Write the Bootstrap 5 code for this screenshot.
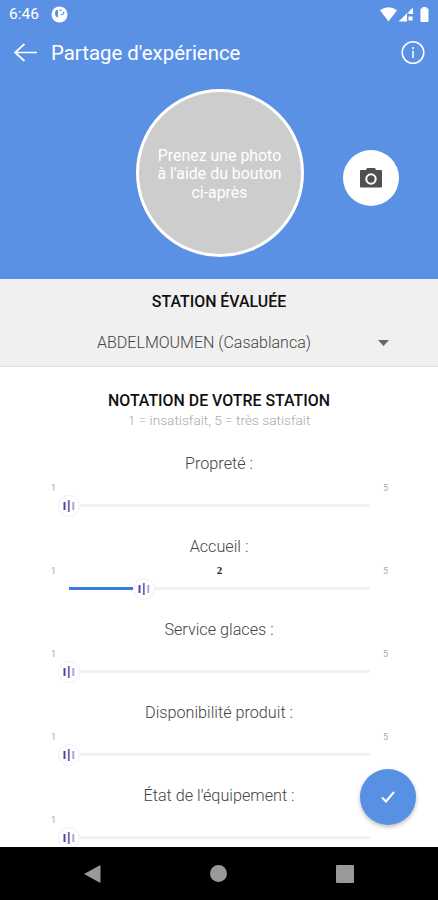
<!DOCTYPE html>
<html lang="fr">
<head>
<meta charset="utf-8">
<meta name="viewport" content="width=device-width, initial-scale=1">
<title>Partage d'expérience</title>
<link rel="stylesheet" href="https://cdn.jsdelivr.net/npm/bootstrap@5.3.0/dist/css/bootstrap.min.css">
<style>
body{font-family:Roboto,"Liberation Sans",sans-serif;color:#444}
.screen{width:438px;height:900px}
.hero{height:278.5px;background:#5b91e5}
.status{height:28px;font-size:15.5px;padding:1px 8px 0 9px}
.notice{margin-left:12px}
.appbar{height:50px;padding:0 13px}
.appbar h1{font-size:20.4px;margin:0 0 0 13px;font-weight:400;line-height:28px}
.photo-row{padding:10.5px 0 0 135.5px}
.photo{width:168px;height:168px;background:#cdcdcd;border:3px solid #fff;font-size:15.9px;line-height:18.6px;padding-top:4px}
.camera{width:56px;height:56px;margin:11px 0 0 39px}
.station{height:88.5px;background:#f0f0f0;border-bottom:1px solid #e2e2e2}
.heading{font-size:15.9px;font-weight:500;line-height:20px;color:#111;margin:0}
.station .heading{padding-top:13.5px}
.choice{font-size:16px;line-height:24px;margin-top:19px;padding:0 49px 0 30px}
.choice-name{font-weight:300}
.ratings{height:480px}
.hint{font-size:13.7px;line-height:18px;color:#aaa;font-weight:300}
.criteria{padding-top:23px}
.rating{height:83px}
.rating-name{font-size:16.2px;line-height:24px;font-weight:300}
.scale{height:17px;padding:0 50px 0 51px;font-size:9px;line-height:25px;color:#aaa}
.scale strong{font:bold 11px/22px "Liberation Serif",serif;color:#222}
.slider{height:24px;margin:.5px 68px 0 58px}
.fill{height:3px;background:#3a7ddb;margin-left:11px}
.rest{height:3px;background:#f0f1f2;border-radius:0 2px 2px 0}
.knob{width:22px;height:22px;background:#fff;border:1px solid #f0f0f5}
.sysnav{height:53px;background:#000;padding:0 84px}
.confirm{width:56px;height:56px;right:22px;bottom:75px;background:#5890e4;box-shadow:0 2px 4px #0004}
</style>
</head>
<body>
<div class="screen d-flex flex-column position-relative overflow-hidden bg-white">
  <header class="hero text-white flex-shrink-0">
    <div class="status d-flex align-items-center">
      <span>6:46</span>
      <svg class="notice" width="17" height="17" viewBox="0 0 17 17"><circle cx="8.500" cy="8.500" r="8" fill="#fff"/><path d="M7 3.800Q4 3.800 4 7.500Q4 10.500 7 11.500z" fill="#5b91e5"/><path d="M8.500 4.200H11M12.700 5.500v1.500q-.3 1.700-3 1.700" fill="none" stroke="#5b91e5" stroke-width="1.200"/></svg>
      <svg class="ms-auto" width="52" height="17" viewBox="0 0 52 17"><path d="M2 4.300Q10.500-1.600 19 4.300L10.500 15.500z" fill="#fff"/><path d="M20.500 15.500 35 1.500V8H29V15.500z" fill="#fff"/><path d="M30 6v4" stroke="#5b91e5" stroke-width="1"/><path d="M30.500 10.500h4v4h-4z" fill="#fff"/><path d="M44.500 1h4v1.500h2V15q0 1-1 1h-6q-1 0-1-1V2.500h2z" fill="#fff"/></svg>
    </div>
    <div class="appbar d-flex align-items-center">
      <svg width="25" height="20" viewBox="0 0 25 20" fill="none" stroke="#fff" stroke-width="1.700"><path d="M24 9.500H2M11.500 1 2 9.500 11.500 18"/></svg>
      <h1>Partage d'expérience</h1>
      <svg class="ms-auto" width="24" height="24" viewBox="0 0 24 24" fill="none" stroke="#fff"><circle cx="12" cy="11.500" r="10.800" stroke-width="1.500"/><path d="M12 9.500v7.500M12 6v2" stroke-width="1.500"/></svg>
    </div>
    <div class="photo-row d-flex align-items-center">
      <div class="photo rounded-circle d-flex align-items-center justify-content-center text-center">Prenez une photo<br>à l'aide du bouton<br>ci-après</div>
      <button class="camera btn p-0 border-0 bg-white rounded-circle d-flex align-items-center justify-content-center" aria-label="Photo">
        <svg width="24" height="22" viewBox="0 0 24 22"><path d="M2 3H7L8 1H16L17 3H22Q23 3 23 4V19.500Q23 20.500 22 20.500H2Q1 20.500 1 19.500V4Q1 3 2 3z" fill="#505050"/><circle cx="12" cy="12" r="4.700" fill="#505050" stroke="#fff" stroke-width="2"/></svg>
      </button>
    </div>
  </header>
  <section class="station text-center flex-shrink-0">
    <h2 class="heading">STATION ÉVALUÉE</h2>
    <div class="choice d-flex align-items-center">
      <span class="choice-name flex-grow-1">ABDELMOUMEN (Casablanca)</span>
      <svg width="11" height="6" viewBox="0 0 11 6"><path d="M0 0h11L5.500 6z" fill="#666"/></svg>
    </div>
  </section>
  <main class="ratings text-center overflow-hidden flex-shrink-0">
    <h2 class="heading mt-4">NOTATION DE VOTRE STATION</h2>
    <div class="hint">1 = insatisfait, 5 = très satisfait</div>
    <div id="list" class="criteria"></div>
  </main>
  <nav class="sysnav d-flex align-items-center justify-content-between flex-shrink-0">
    <svg width="17" height="18" viewBox="0 0 17 18"><path d="M0 9 15.500 0.500Q16.500 0 16.500 1V17Q16.500 18 15.500 17.500z" fill="#999"/></svg>
    <svg width="17" height="17" viewBox="0 0 17 17"><circle cx="8.500" cy="8.500" r="8.500" fill="#999"/></svg>
    <svg width="18" height="18" viewBox="0 0 18 18"><rect width="18" height="18" rx="1" fill="#999"/></svg>
  </nav>
  <button class="confirm btn p-0 border-0 rounded-circle position-absolute d-flex align-items-center justify-content-center" aria-label="Valider">
    <svg width="16" height="14" viewBox="0 0 16 14" fill="none" stroke="#fff" stroke-width="2"><path d="M2 7.500 6 11.500 14 2"/></svg>
  </button>
</div>
<script>
const criteria = [["Propreté :", 1], ["Accueil :", 2], ["Service glaces :", 1], ["Disponibilité produit :", 1], ["État de l'équipement :", 1]];
document.getElementById("list").innerHTML = criteria.map(([name, value]) => `
  <div class="rating">
    <div class="rating-name">${name}</div>
    <div class="scale d-flex justify-content-between"><span>1</span>${value > 1 ? `<strong>${value}</strong>` : ""}<span>5</span></div>
    <div class="slider d-flex align-items-center">
      ${value > 1 ? `<div class="fill" style="width:${(value - 1) * 75.25 - 11}px"></div>` : ""}
      <div class="knob rounded-circle flex-shrink-0 d-flex align-items-center justify-content-center">
        <svg width="12" height="12" viewBox="0 0 12 12"><path d="M1.500 2v8" stroke="#5146a5" stroke-width="2"/><path d="M5.800 0v12" stroke="#6b63b8" stroke-width="1.800"/><path d="M10.300 2v8" stroke="#aaa6d8" stroke-width="2"/></svg>
      </div>
      <div class="rest flex-grow-1"></div>
    </div>
  </div>`).join("");
</script>
<script src="https://cdn.jsdelivr.net/npm/bootstrap@5.3.0/dist/js/bootstrap.bundle.min.js"></script>
</body>
</html>
